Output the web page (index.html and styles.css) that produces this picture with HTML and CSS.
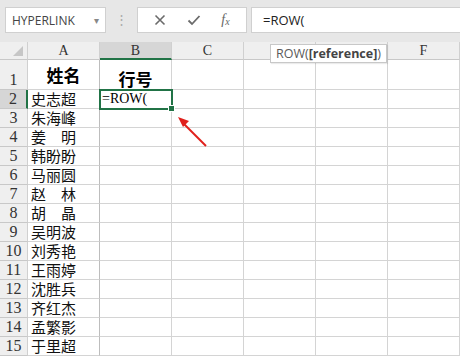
FILE: index.html
```html
<!DOCTYPE html>
<html lang="zh">
<head>
<meta charset="utf-8"/>
<title>ROW</title>
<link rel="stylesheet" href="styles.css">
</head>
<body>
<div class="bar">
  <div class="namebox"><span>HYPERLINK</span><span class="drop">&#9662;</span></div>
  <div class="grip">&#8942;</div>
  <div class="btns">
    <svg class="ico" width="12" height="12" viewBox="0 0 12 12"><path d="M1.5 1.5L10.5 10.5M10.5 1.5L1.5 10.5" stroke="#6b6b6b" stroke-width="1.6" fill="none"/></svg>
    <svg class="ico" width="14" height="12" viewBox="0 0 14 12"><path d="M1.5 6.5L5 10L12.5 2" stroke="#6b6b6b" stroke-width="1.8" fill="none"/></svg>
    <span class="fx">f<sub>x</sub></span>
  </div>
  <div class="formula">=ROW(</div>
</div>
<div class="sheet">
  <div class="grid">
    <div class="hd corner"><span class="tri"></span></div>
    <div class="hd col">A</div>
    <div class="hd col sel">B</div>
    <div class="hd col">C</div>
    <div class="hd col"></div>
    <div class="hd col"></div>
    <div class="hd col">F</div>

    <div class="hd row tall">1</div>
    <div class="c title">姓名</div>
    <div class="c title title-b">行号</div>
    <div class="c"></div><div class="c"></div><div class="c"></div><div class="c"></div>

    <div class="hd row sel">2</div>
    <div class="c name">史志超</div>
    <div class="c active">=ROW(<span class="handle"></span></div>
    <div class="c"></div><div class="c"></div><div class="c"></div><div class="c"></div>

    <div class="hd row">3</div><div class="c name">朱海峰</div><div class="c"></div><div class="c"></div><div class="c"></div><div class="c"></div><div class="c"></div>
    <div class="hd row">4</div><div class="c name">姜　明</div><div class="c"></div><div class="c"></div><div class="c"></div><div class="c"></div><div class="c"></div>
    <div class="hd row">5</div><div class="c name">韩盼盼</div><div class="c"></div><div class="c"></div><div class="c"></div><div class="c"></div><div class="c"></div>
    <div class="hd row">6</div><div class="c name">马丽圆</div><div class="c"></div><div class="c"></div><div class="c"></div><div class="c"></div><div class="c"></div>
    <div class="hd row">7</div><div class="c name">赵　林</div><div class="c"></div><div class="c"></div><div class="c"></div><div class="c"></div><div class="c"></div>
    <div class="hd row">8</div><div class="c name">胡　晶</div><div class="c"></div><div class="c"></div><div class="c"></div><div class="c"></div><div class="c"></div>
    <div class="hd row">9</div><div class="c name">吴明波</div><div class="c"></div><div class="c"></div><div class="c"></div><div class="c"></div><div class="c"></div>
    <div class="hd row">10</div><div class="c name">刘秀艳</div><div class="c"></div><div class="c"></div><div class="c"></div><div class="c"></div><div class="c"></div>
    <div class="hd row">11</div><div class="c name">王雨婷</div><div class="c"></div><div class="c"></div><div class="c"></div><div class="c"></div><div class="c"></div>
    <div class="hd row">12</div><div class="c name">沈胜兵</div><div class="c"></div><div class="c"></div><div class="c"></div><div class="c"></div><div class="c"></div>
    <div class="hd row">13</div><div class="c name">齐红杰</div><div class="c"></div><div class="c"></div><div class="c"></div><div class="c"></div><div class="c"></div>
    <div class="hd row">14</div><div class="c name">孟繁影</div><div class="c"></div><div class="c"></div><div class="c"></div><div class="c"></div><div class="c"></div>
    <div class="hd row">15</div><div class="c name">于里超</div><div class="c"></div><div class="c"></div><div class="c"></div><div class="c"></div><div class="c"></div>
  </div>
  <div class="tip">ROW(<b>[reference]</b>)</div>
  <svg class="arrow" width="40" height="34" viewBox="0 0 40 34"><path d="M30 32L6 8" stroke="#e0201c" stroke-width="2" fill="none"/><path d="M2 3L13 7L7 13Z" fill="#e0201c"/></svg>
</div>
</body>
</html>
```
FILE: styles.css
```css
body { margin: 0; width: 460px; height: 356px; overflow: hidden; background: #fff; font-family: "Liberation Sans", sans-serif; }

.bar { height: 42px; background: #e7e7e7; display: flex; align-items: flex-start; padding-top: 7px; box-sizing: border-box; }
.namebox { width: 101px; height: 26px; margin-left: 5px; background: #fff; border: 1px solid #d0d0d0; box-sizing: border-box; display: flex; align-items: center; justify-content: space-between; padding: 0 6px 0 6px; font-family: "Open Sans", sans-serif; font-size: 12px; color: #444; }
.drop { font-size: 10px; color: #888; }
.grip { width: 31px; text-align: center; color: #aaa; font-size: 13px; line-height: 26px; }
.btns { width: 110px; height: 26px; background: #fff; border: 1px solid #d0d0d0; box-sizing: border-box; display: flex; align-items: center; justify-content: space-around; padding: 0 6px; }
.fx { font-family: "Liberation Serif", serif; font-style: italic; font-size: 14px; color: #666; }
.fx sub { font-size: 10px; vertical-align: -1px; }
.formula { flex: 1; height: 26px; margin-left: 4px; background: #fff; border: 1px solid #d0d0d0; border-right: none; box-sizing: border-box; padding-left: 11px; font-family: "Open Sans", sans-serif; font-size: 13px; line-height: 24px; color: #222; }

.sheet { position: relative; }
.grid { display: grid; grid-template-columns: 28px repeat(6, 72px); grid-template-rows: 18px 30px repeat(14, 19px); }
.hd { background: #efefef; border-right: 1px solid #d0d0d0; border-bottom: 1px solid #c8c8c8; box-sizing: border-box; font-family: "Liberation Serif", serif; color: #333; text-align: center; }
.corner { position: relative; }
.tri { position: absolute; right: 4px; bottom: 3px; width: 0; height: 0; border-left: 10px solid transparent; border-bottom: 10px solid #c6c6c6; }
.col { font-size: 14px; line-height: 18px; }
.col.sel { background: #d6d6d6; border-bottom: 2px solid #217346; }
.row { font-size: 16px; line-height: 19px; display: flex; align-items: flex-end; justify-content: center; }
.row.sel { background: #d6d6d6; border-right: 2px solid #217346; }
.c { border-right: 1px solid #d4d4d4; border-bottom: 1px solid #d4d4d4; box-sizing: border-box; font-family: "Noto Sans CJK SC", sans-serif; color: #000; position: relative; white-space: nowrap; overflow: visible; }
.c:nth-child(7n+2) { border-right-color: #bdbdbd; }
.title { font-size: 17px; font-weight: bold; text-align: center; line-height: 26px; padding-top: 2px; }
.title-b { padding-top: 6px; }
.name { font-size: 15px; line-height: 18px; padding-left: 3px; color: #111; }
.active { font-family: "Liberation Serif", serif; font-size: 14px; line-height: 17px; padding-left: 2px; outline: 2px solid #217346; outline-offset: -1px; z-index: 1; }
.handle { position: absolute; right: -4px; bottom: -4px; width: 5px; height: 5px; background: #217346; border: 1px solid #fff; }

.tip { position: absolute; left: 270px; top: 2px; height: 19px; padding: 0 5px; background: #fff; border: 1px solid #c8c8c8; box-sizing: border-box; font-family: "Open Sans", sans-serif; font-size: 12.5px; line-height: 17px; color: #5a5a5a; box-shadow: 1px 1px 1px rgba(0,0,0,0.08); }
.tip b { color: #444; }
.arrow { position: absolute; left: 176px; top: 72px; }
```
